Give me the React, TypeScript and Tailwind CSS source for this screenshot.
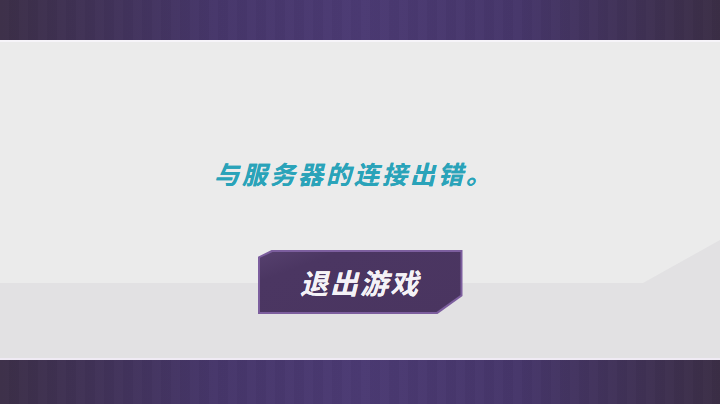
import React from "react";

const cjk = { fontFamily: '"Noto Sans CJK SC", "Noto Sans", sans-serif' };

function Band() {
  return (
    <div className="relative h-full w-full bg-[linear-gradient(to_right,#3c2f48_0%,#46366a_30%,#4b3a73_50%,#46366a_72%,#3b2e46_100%)]">
      <div className="absolute inset-0 bg-[repeating-linear-gradient(90deg,rgba(255,255,255,0.012)_0px,rgba(255,255,255,0.012)_9px,rgba(0,0,0,0.015)_9px,rgba(0,0,0,0.015)_19px)]" />
    </div>
  );
}

function ExitButton() {
  return (
    <button
      type="button"
      className="relative h-[64px] w-[205px] bg-[#7c5e9e] [clip-path:polygon(14px_0,100%_0,100%_calc(100%-18px),calc(100%-25px)_100%,0_100%,0_7px)]"
    >
      <div className="absolute inset-[2px] bg-[linear-gradient(160deg,#56406e_0%,#4b3662_22%,#4a3560_100%)] [clip-path:polygon(13px_0,100%_0,100%_calc(100%-17px),calc(100%-24px)_100%,0_100%,0_6px)]" />
      <span
        className="relative block text-[28px] leading-none font-bold italic tracking-[2px] text-[#f4f2f6] [text-shadow:0_0_0.6px_#f4f2f6]"
        style={cjk}
      >
        退出游戏
      </span>
    </button>
  );
}

export default function App() {
  return (
    <div className="flex h-[404px] w-[720px] flex-col overflow-hidden bg-[#ebebeb]">
      <div className="h-[40px] shrink-0">
        <Band />
      </div>

      <div className="relative flex h-[320px] shrink-0 flex-col items-center border-t-2 border-b-2 border-t-[#f6f4f9] border-b-[#efeaf4] bg-[#ebebeb]">
        {/* lower shaded strip with the rising slant on the right */}
        <svg
          className="absolute inset-0 h-full w-full"
          viewBox="0 0 720 316"
          preserveAspectRatio="none"
        >
          <polygon points="0,241 643,241 720,198 720,316 0,316" fill="#e2e1e3" />
        </svg>

        <p
          className="relative mt-[115px] mr-[12px] text-[25px] leading-[32px] font-bold italic tracking-[3px] text-[#2aa3b9] [text-shadow:0_0_0.6px_#2aa3b9]"
          style={cjk}
        >
          与服务器的连接出错。
        </p>

        <div className="relative mt-[61px]">
          <ExitButton />
        </div>
      </div>

      <div className="h-[44px] shrink-0">
        <Band />
      </div>
    </div>
  );
}
